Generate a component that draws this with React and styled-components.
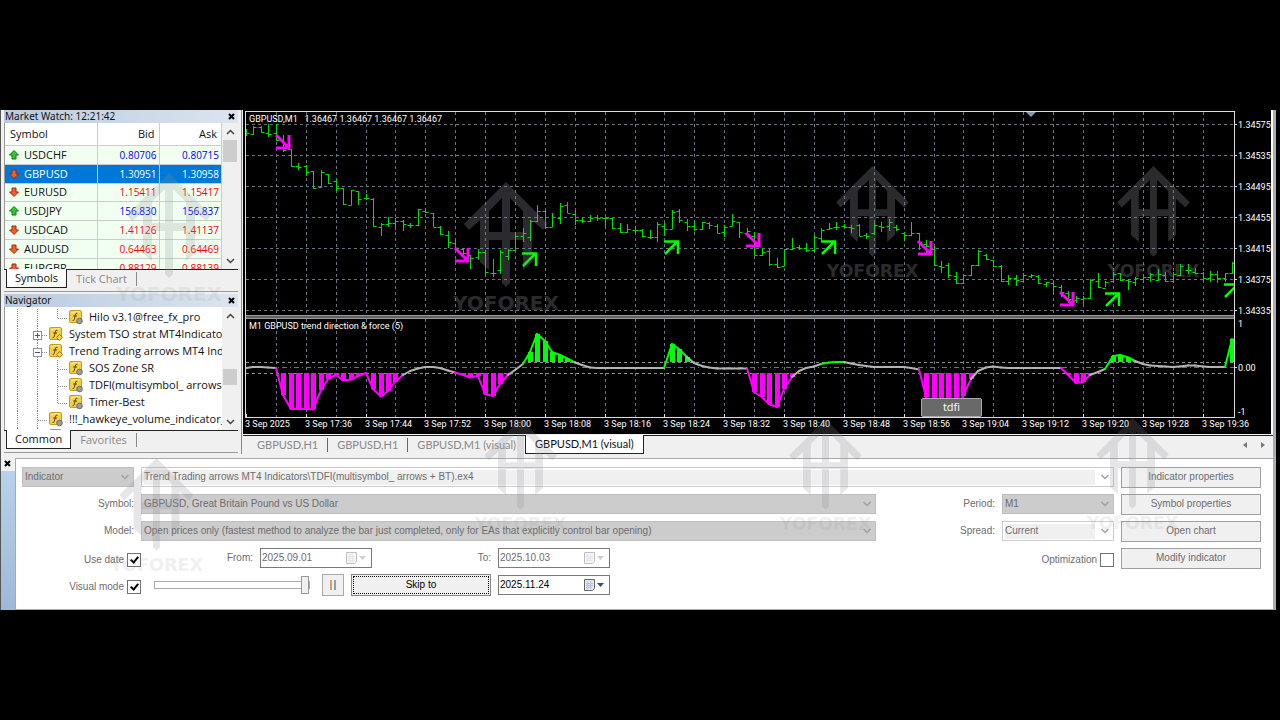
import React, { useState } from 'react'
import styled, { createGlobalStyle, css } from 'styled-components';

const GlobalStyle = createGlobalStyle`
  * { box-sizing: border-box; }
  body { margin: 0; background: #000; }
  button, input, select { font: inherit; color: inherit; margin: 0; padding: 0; border: 0; border-radius: 0; background: none; }
`;

const quotes = [
  { symbol: 'USDCHF', bid: '0.80706', ask: '0.80715', up: true },
  { symbol: 'GBPUSD', bid: '1.30951', ask: '1.30958', selected: true },
  { symbol: 'EURUSD', bid: '1.15411', ask: '1.15417' },
  { symbol: 'USDJPY', bid: '156.830', ask: '156.837', up: true },
  { symbol: 'USDCAD', bid: '1.41126', ask: '1.41137' },
  { symbol: 'AUDUSD', bid: '0.64463', ask: '0.64469' },
  { symbol: 'EURGBP', bid: '0.88129', ask: '0.88139' },
];

const tree = [
  { text: 'Hilo v3.1@free_fx_pro', guides: ['line', 'line', 'end'] },
  { text: 'System TSO strat MT4Indicators', guides: ['line', 'plus'], folder: true },
  { text: 'Trend Trading arrows MT4 Indicators', guides: ['line', 'minus'], folder: true },
  { text: 'SOS Zone SR', guides: ['line', 'line', 'branch'] },
  { text: 'TDFI(multisymbol_ arrows + BT)', guides: ['line', 'line', 'branch'] },
  { text: 'Timer-Best', guides: ['line', 'line', 'end'] },
  { text: '!!!_hawkeye_volume_indicator_', guides: ['line', 'branch'] },
  { text: '', guides: ['line', 'branch'] },
];

// high, low, open, close
const bars = [
  [23,30,27,27],[20,29,28,21],[20,27,21,26],[18,31,27,28],[18,35,27,34],[29,46,34,44],[43,61,43,60],[57,64,60,61],
  [59,70,60,66],[65,83,65,82],[64,81,81,66],[68,78,68,77],[73,85,75,82],[82,99,82,98],[84,99,99,84],[85,99,85,93],
  [88,94,92,92],[92,121,93,120],[117,130,121,118],[111,121,118,117],[112,124,117,115],[114,125,115,118],[117,122,119,119],[103,120,119,103],
  [103,107,105,106],[107,121,107,121],[120,129,121,128],[125,142,129,136],[134,145,137,142],[142,152,143,147],[149,163,149,152],[143,154,151,146],
  [146,171,146,166],[153,171,167,167],[144,168,164,146],[143,154,150,144],[127,145,144,130],[122,136,130,127],[114,135,131,115],[99,116,115,105],
  [104,123,105,121],[107,121,121,111],[97,118,112,100],[96,107,99,107],[104,119,108,114],[112,117,114,115],[109,116,115,112],[109,115,111,112],
  [111,121,112,112],[112,123,112,122],[117,127,122,126],[118,127,126,123],[120,127,124,124],[123,131,124,130],[124,133,131,131],[116,136,131,118],
  [117,130,120,123],[104,123,123,106],[103,117,105,114],[113,125,116,120],[115,125,120,123],[116,124,123,116],[116,123,117,119],[118,127,120,127],
  [119,131,126,121],[108,120,120,115],[116,132,116,126],[122,131,127,125],[126,149,130,149],[142,150,149,146],[143,160,145,158],[152,162,158,161],
  [143,160,160,143],[132,144,143,142],[139,144,141,142],[137,146,142,144],[129,146,144,131],[122,136,132,124],[117,124,123,122],[116,124,121,121],
  [118,122,120,121],[119,127,121,122],[118,130,119,130],[127,133,129,130],[117,129,127,119],[116,126,120,121],[113,125,120,116],[119,125,121,123],
  [126,135,127,129],[116,130,129,127],[127,144,127,136],[134,147,138,140],[140,160,143,159],[155,167,160,161],[157,172,159,169],[166,178,170,177],
  [168,178,177,169],[159,170,169,159],[144,160,159,145],[148,154,149,153],[154,161,154,160],[159,176,160,175],[169,179,175,172],[169,180,172,174],
  [167,176,175,169],[168,172,170,169],[169,178,170,177],[176,181,178,176],[175,188,177,180],[179,191,181,186],[185,197,187,193],[190,197,194,192],
  [190,198,193,192],[173,193,192,174],[167,182,175,181],[175,181,182,176],[166,176,175,168],[167,175,167,174],[173,184,174,175],[171,180,176,172],
  [169,177,173,171],[167,176,171,168],[163,175,174,168],[166,176,169,175],[166,176,175,168],[158,170,169,160],[158,168,164,164],[162,168,166,167],
  [166,175,167,172],[165,176,172,168],[165,177,168,172],[167,176,172,167],[156,168,167,157],
];

const force = [
  57,56,56,56.5,57,84,98,98,98,98.5,79,68,64,69.5,68.5,65,62,78,85.5,80,71,64,60,57.5,56,56,57,59.5,61.5,64,66.5,65,
  83,85,73,64,59,53,41,23,30,41,44,47.5,51.5,54,56.5,57,57,57,57,57,57,57,57,57,57,33,38,46,52,55,56.5,57.5,
  57.5,57.5,57.5,57.5,81,86,93,96,78,66,60,57,55.5,53,51.5,51,51,52.5,54,55,56,56,56,56,56,57,58.5,86,94,98,98,96,
  85,68,60,56.5,55.5,56.5,57,57,57,57,57,57,57,57,64,72,71,64,61,58,45,44,46.5,50,53,54.5,55,55.5,56,55.5,54.5,54.5,
  55.5,56,56,56,28,
];

const signals = [
  { x: 33, y: 25 }, { x: 212, y: 138 }, { x: 279, y: 142, up: true }, { x: 421, y: 130, up: true }, { x: 503, y: 123 },
  { x: 578, y: 130, up: true }, { x: 675, y: 131 }, { x: 817, y: 182 }, { x: 862, y: 182, up: true }, { x: 981, y: 173, up: true },
];

const prices = ['1.34575', '1.34535', '1.34495', '1.34455', '1.34415', '1.34375', '1.34335'];

const times = [
  '3 Sep 2025', '3 Sep 17:36', '3 Sep 17:44', '3 Sep 17:52', '3 Sep 18:00', '3 Sep 18:08', '3 Sep 18:16', '3 Sep 18:24', '3 Sep 18:32',
  '3 Sep 18:40', '3 Sep 18:48', '3 Sep 18:56', '3 Sep 19:04', '3 Sep 19:12', '3 Sep 19:20', '3 Sep 19:28', '3 Sep 19:36',
];

const marks = [
  { left: '8.9%', top: 63, width: 110, pale: true },
  { left: '35.4%', top: 72, width: 110 },
  { left: '64.8%', top: 56, width: 95 },
  { left: '86.9%', top: 56, width: 95 },
  { left: '8.4%', top: 348, width: 97, pale: true },
  { left: '37.1%', top: 309, width: 95, pale: true },
  { left: '61.1%', top: 309, width: 95, pale: true },
  { left: '85.2%', top: 308, width: 95, pale: true },
];

const STEP = 7.473;
const barX = i => Math.round(i * STEP);

export default function App() {
  return (
    <Page>
      <GlobalStyle/>
      <Terminal>
        <Workspace>
          <Sidebar>
            <MarketWatch/>
            <Navigator/>
          </Sidebar>
          <Charts/>
        </Workspace>
        <Tester/>
        {marks.map(m => <Watermark key={m.left} {...m}/>)}
      </Terminal>
    </Page>
  )
}

const PanelHead = ({title}) => (
  <Head>
    <span>{title}</span>
    <CloseButton aria-label={`Close ${title}`}><Cross/></CloseButton>
  </Head>
)

const Cross = () => (
  <svg width="7" height="7" viewBox="0 0 7 7"><path d="M1 1l5 5M6 1L1 6" stroke="#000" strokeWidth="2"/></svg>
)

const Chevron = ({up, color = '#444', size = 9}) => (
  <svg width={size} height="6" viewBox="0 0 9 6">
    <path d={up ? 'M1 5l3.500-3.500L8 5' : 'M1 1l3.500 3.500L8 1'} fill="none" stroke={color} strokeWidth="1.500"/>
  </svg>
)

const Scrollbar = ({lead}) => (
  <ScrollTrack>
    <Chevron up/>
    <ScrollThumb $lead={lead}/>
    <Chevron/>
  </ScrollTrack>
)

const Direction = ({up}) => (
  <svg width="10" height="10" viewBox="0 0 10 10">
    <path
      d={up ? 'M5 .5L9.500 5H7v4H3V5H.5z' : 'M5 9.500L9.500 5H7V1H3v4H.5z'}
      fill={up ? '#35c435' : '#f0602c'}
      stroke={up ? '#0c7a1c' : '#9c2c10'}
      strokeWidth="1"
    />
  </svg>
)

const MarketWatch = () => {
  const [tab, setTab] = useState('Symbols');
  return (
    <Panel>
      <PanelHead title="Market Watch: 12:21:42"/>
      <PanelBody $height={146}>
        <Quotes>
          <thead>
            <tr><th>Symbol</th><th>Bid</th><th>Ask</th></tr>
          </thead>
          <tbody>
            {quotes.map(q => (
              <QuoteRow key={q.symbol} $up={q.up} $selected={q.selected}>
                <td><SymbolName><Direction up={q.up}/>{q.symbol}</SymbolName></td>
                <td>{q.bid}</td>
                <td>{q.ask}</td>
              </QuoteRow>
            ))}
          </tbody>
        </Quotes>
        <Scrollbar lead={5}/>
      </PanelBody>
      <PanelTabs>
        {['Symbols', 'Tick Chart'].map(t => (
          <PanelTab key={t} $active={t === tab} onClick={() => setTab(t)}>{t}</PanelTab>
        ))}
      </PanelTabs>
    </Panel>
  )
}

const Guide = ({kind}) => {
  const box = kind === 'plus' || kind === 'minus';
  return (
    <svg width="20" height="17" viewBox="0 0 20 17" fill="none" stroke="#888">
      <path d={kind === 'end' ? 'M8.500 0V9' : 'M8.500 0V17'} strokeDasharray="1 1"/>
      {kind !== 'line' && <path d="M9 9.500H19" strokeDasharray="1 1"/>}
      {box && <rect x="4.500" y="5.500" width="8" height="8" fill="#fff" stroke="#8a9099"/>}
      {box && <path d={kind === 'plus' ? 'M6 9.500h5M8.500 7v5' : 'M6 9.500h5'} stroke="#3c54a0"/>}
    </svg>
  )
}

const Indicator = ({folder}) => (
  <svg width="14" height="15" viewBox="0 0 14 15">
    <rect x=".5" y=".5" width="12" height="12" rx="1.500" fill="#f3cf48" stroke="#c79a22"/>
    <path d="M2 3Q6 1 11 2" stroke="#fff2b0" fill="none"/>
    <path d="M8.500 3.200Q6.800 2.400 6.300 5L5.300 9.300Q4.900 11 3.600 10.500M4.200 6h3.800" stroke="#5d4714" fill="none"/>
    {folder
      ? <path d="M10.500 7.500l3 3-3 3-3-3z" fill="#f6d13f" stroke="#a37b12"/>
      : <circle cx="10.500" cy="11" r="2.800" fill="#9c9c98" stroke="#6c6c6c"/>}
  </svg>
)

const Navigator = () => {
  const [tab, setTab] = useState('Common');
  return (
    <Panel>
      <PanelHead title="Navigator"/>
      <PanelBody $height={123}>
        <Tree>
          {tree.map((node, i) => (
            <TreeRow key={i}>
              {node.guides.map((g, n) => <Guide key={n} kind={g}/>)}
              <Indicator folder={node.folder}/>
              <span>{node.text}</span>
            </TreeRow>
          ))}
        </Tree>
        <Scrollbar lead={50}/>
      </PanelBody>
      <PanelTabs>
        {['Common', 'Favorites'].map(t => (
          <PanelTab key={t} $active={t === tab} onClick={() => setTab(t)}>{t}</PanelTab>
        ))}
      </PanelTabs>
    </Panel>
  )
}

const PriceBars = () => (
  <g transform="translate(3 -4)" fill="none" stroke="#00e000">
    {bars.map(([high, low, open, close], i) => {
      const x = barX(i) + 0.5;
      return <path key={i} d={`M${x} ${high}V${low}M${x - 3} ${open + 0.5}H${x}M${x} ${close + 0.5}H${x + 3}`}/>
    })}
  </g>
)

const lineColor = v => v >= 62 ? '#ff00ff' : v <= 51.5 ? '#00ff00' : '#b4b4b4';

const ForcePlot = () => (
  <g transform="translate(3 201)">
    {force.map((v, i) => {
      if (v >= 63) return <rect key={i} x={barX(i) - 2} y="62" width="5" height={v - 62} fill="#ff00ff"/>
      if (v <= 50) return <rect key={i} x={barX(i) - 2} y={v} width="5" height={51 - v} fill="#00ff00"/>
      return null
    })}
    {force.slice(1).map((v, i) => (
      <path key={i} d={`M${barX(i)} ${force[i]}L${barX(i + 1)} ${v}`} stroke={lineColor(v)} strokeWidth="2" strokeLinecap="round"/>
    ))}
  </g>
)

const Signal = ({x, y, up}) => (
  <path
    transform={`translate(${x} ${y})`}
    d={up ? 'M1 14L13 2M0 1.500H14V14' : 'M0 0L12 12M13 0V13H0'}
    fill="none"
    stroke={up ? '#00ff00' : '#ff00ff'}
    strokeWidth={up ? 2.5 : 3}
  />
)

const ChartDrawing = () => (
  <Drawing viewBox="0 0 1028 324" role="img" aria-label="GBPUSD M1 chart">
    <defs>
      <clipPath id="plot"><path d="M3 2H991V307H3z"/></clipPath>
    </defs>
    <g clipPath="url(#plot)">
      <g stroke="#778899" strokeDasharray="3 3" fill="none" shapeRendering="crispEdges" opacity=".85">
        {Array.from({ length: 32 }, (_, i) => {
          const x = 3 + barX(4 + i * 4) + 0.5;
          return <path key={i} d={`M${x} 2V204M${x} 209V307`}/>
        })}
        {prices.map((p, i) => <path key={p} d={`M3 ${Math.round(14 + i * 31.07) + 0.5}H991`}/>)}
        <path d="M3 257.500H991" strokeDasharray="5 3 1 3"/>
        <path d="M3 252.500H991M3 263.500H991" stroke="#aaa"/>
      </g>
      <PriceBars/>
      <ForcePlot/>
      {signals.map((s, i) => <Signal key={i} {...s}/>)}
    </g>
    <path d="M783 2h10l-5 5z" fill="#8899aa"/>
    <g stroke="#dcdcdc" fill="none" shapeRendering="crispEdges">
      <path d="M2.500 1V308M2 1.500H992M991.500 1V308M2 307.500H992"/>
      <path d="M3 205.500H991M3 208.500H991" stroke="#999"/>
      <path d="M3 207H991" stroke="#606060" strokeWidth="2"/>
      {prices.map((p, i) => <path key={p} d={`M992 ${Math.round(14 + i * 31.07) + 0.5}h2`}/>)}
      {times.map((t, i) => <path key={t} d={`M${barX(i * 8) + 3.5} 304v4`}/>)}
      <path d="M992 257.500h2"/>
    </g>
    <ChartText x="6" y="12">GBPUSD,M1&nbsp;&nbsp; 1.36467 1.36467 1.36467 1.36467</ChartText>
    <ChartText x="6" y="219">M1 GBPUSD trend direction &amp; force (5)</ChartText>
    {prices.map((p, i) => <ChartText key={p} x="995" y={Math.round(18 + i * 31.07)}>{p}</ChartText>)}
    <ChartText x="995" y="217">1</ChartText>
    <ChartText x="995" y="261">0.00</ChartText>
    <ChartText x="995" y="305">-1</ChartText>
    {times.map((t, i) => <ChartText key={t} x={2 + barX(i * 8)} y="317">{t}</ChartText>)}
  </Drawing>
)

const chartTabs = ['GBPUSD,H1', 'GBPUSD,H1', 'GBPUSD,M1 (visual)', 'GBPUSD,M1 (visual)'];

const Charts = () => {
  const [active, setActive] = useState(3);
  return (
    <ChartArea>
      <ChartWindow>
        <ChartDrawing/>
        <TdfiButton>tdfi</TdfiButton>
      </ChartWindow>
      <ChartTabs>
        {chartTabs.map((t, i) => (
          <ChartTab key={i} $active={i === active} $ruled={i < 2} onClick={() => setActive(i)}>{t}</ChartTab>
        ))}
        <TabArrows>
          <button aria-label="Previous"><svg width="4" height="6"><path d="M4 0v6L0 3z" fill="#777"/></svg></button>
          <button aria-label="Next"><svg width="4" height="6"><path d="M0 0v6l4-3z" fill="#777"/></svg></button>
        </TabArrows>
      </ChartTabs>
    </ChartArea>
  )
}

const Combo = ({id, value, label, light, grow}) => (
  <ComboBox $light={light} $grow={grow}>
    <select id={id} aria-label={label} defaultValue={value}><option>{value}</option></select>
    <Chevron color="#a0a0a0" size={10}/>
  </ComboBox>
)

const DateField = ({id, label, value, active}) => (
  <DateBox $active={active}>
    <input id={id} aria-label={label} defaultValue={value}/>
    <button aria-label="Pick a date">
      <svg width="21" height="12" viewBox="0 0 21 12" opacity={active ? 1 : 0.4}>
        <path d="M.5 .5h10v9l-2 2h-8z" fill="#e4e8f0" stroke="#67635f"/>
        <path d="M2 4.500h7M2 6.500h7M2 8.500h6M3.500 2v8M6.500 2v8" stroke="#b8c4dc"/>
        <path d="M13 4h7l-3.500 4z" fill={active ? '#2c4c84' : '#888'}/>
      </svg>
    </button>
  </DateBox>
)

const Check = ({id, label, checked}) => (
  <CheckLabel htmlFor={id}>
    {label}
    <CheckInput id={id} type="checkbox" defaultChecked={checked}/>
  </CheckLabel>
)

const Tester = () => (
  <TesterPanel>
    <TesterStrip>
      <CloseButton aria-label="Close tester"><Cross/></CloseButton>
    </TesterStrip>
    <Form onSubmit={e => e.preventDefault()}>
      <Fields>
        <Row>
          <Combo label="Program type" value="Indicator"/>
          <Combo label="Program" value="Trend Trading arrows MT4 Indicators\TDFI(multisymbol_ arrows + BT).ex4" light grow/>
        </Row>
        <Row>
          <Label htmlFor="symbol">Symbol:</Label>
          <Combo id="symbol" value="GBPUSD, Great Britain Pound vs US Dollar" grow/>
          <Label htmlFor="period">Period:</Label>
          <Combo id="period" value="M1"/>
        </Row>
        <Row>
          <Label htmlFor="model">Model:</Label>
          <Combo id="model" value="Open prices only (fastest method to analyze the bar just completed, only for EAs that explicitly control bar opening)" grow/>
          <Label htmlFor="spread">Spread:</Label>
          <Combo id="spread" value="Current" light/>
        </Row>
        <Row>
          <LeadCell><Check id="use-date" label="Use date" checked/></LeadCell>
          <Label htmlFor="from">From:</Label>
          <DateField id="from" value="2025.09.01"/>
          <Label htmlFor="to">To:</Label>
          <DateField id="to" value="2025.10.03"/>
          <Spacer/>
          <Check id="optimization" label="Optimization"/>
        </Row>
        <Row>
          <LeadCell><Check id="visual" label="Visual mode" checked/></LeadCell>
          <Speed type="range" aria-label="Speed" defaultValue="100"/>
          <PauseButton aria-label="Pause">
            <svg width="8" height="10"><path d="M1 0h2v10H1z" fill="#d9a05c"/><path d="M5 0h2v10H5z" fill="#8fa0b4"/></svg>
          </PauseButton>
          <SkipButton>Skip to</SkipButton>
          <DateField label="Skip to date" value="2025.11.24" active/>
        </Row>
      </Fields>
      <Actions>
        {['Indicator properties', 'Symbol properties', 'Open chart', 'Modify indicator'].map(t => (
          <ActionButton key={t}>{t}</ActionButton>
        ))}
      </Actions>
    </Form>
  </TesterPanel>
)

const Watermark = ({left, top, width, pale}) => (
  <Mark style={{ left, top, width }} $pale={pale} viewBox="0 0 110 130" aria-hidden="true">
    <path
      fillRule="evenodd"
      d="M55 0L97 42L92 48L81 38V80L72 88V58H59V101L55 105L51 101V58H38V88L29 80V38L18 48L13 42ZM51 16V50H38V29ZM59 16L72 29V50H59Z"
    />
    <text x="55" y="128" textAnchor="middle">YOFOREX</text>
  </Mark>
)

const Page = styled.div`
  min-height: 100vh;
  display: flex;
  flex-direction: column;
  justify-content: center;
  padding: 0 4px 1px 0;
  background: #000;
`;

const Terminal = styled.main`
  position: relative;
  border-left: 1px solid #555;
  border-right: 3px solid #a9adb2;
  background: #f0f0f0;
  color: #111;
  font: 11px/14px 'Open Sans', 'Noto Sans', sans-serif;
`;

const Workspace = styled.div`
  display: flex;
`;

const Sidebar = styled.aside`
  flex: none;
  width: 241px;
  display: flex;
  flex-direction: column;
  gap: 2px;
  padding: 0 3px;
  border-right: 1px solid #888;
`;

const Panel = styled.section`
  border-bottom: 1px solid #999;
`;

const Head = styled.header`
  display: flex;
  align-items: center;
  justify-content: space-between;
  height: 13px;
  padding: 0 1px;
  background: linear-gradient(90deg, #b9cbe0, #dce4ef);
  font: 10px/12px 'Noto Sans', sans-serif;
`;

const CloseButton = styled.button`
  display: flex;
  align-items: center;
  justify-content: center;
  width: 11px;
  height: 11px;
`;

const PanelBody = styled.div`
  display: flex;
  height: ${p => p.$height}px;
  overflow: hidden;
  background: #fff;
  border-left: 1px solid #999;
`;

const Quotes = styled.table`
  flex: 1;
  height: 155px;
  border-collapse: collapse;
  table-layout: fixed;
  th, td {
    padding: 0 2px;
    text-align: right;
    border-right: 1px solid #ccc;
    border-bottom: 1px solid #ccc;
  }
  th { height: 23px; font-weight: normal; padding-right: 4px; }
  td { font-size: 10px; line-height: 14px; }
  th:first-child, td:first-child { width: 92px; text-align: left; padding-left: 5px; font-size: 11px; }
  td:first-child { padding-left: 4px; }
  th:nth-child(2), td:nth-child(2) { width: 62px; }
`;

const QuoteRow = styled.tr`
  background: ${p => p.$selected ? '#0078d7' : '#f0fff0'};
  color: ${p => p.$selected ? '#fff' : p.$up ? '#00f' : '#f00'};
  td:first-child { color: ${p => p.$selected ? '#fff' : '#111'}; }
`;

const SymbolName = styled.span`
  display: flex;
  align-items: center;
  gap: 5px;
`;

const ScrollTrack = styled.div`
  flex: none;
  width: 16px;
  display: flex;
  flex-direction: column;
  align-items: center;
  padding: 6px 0 5px;
  background: #f0f0f0;
  > svg:last-child { margin-top: auto; }
`;

const ScrollThumb = styled.div`
  width: 14px;
  height: ${p => p.$lead > 20 ? 16 : 22}px;
  margin-top: ${p => p.$lead}px;
  background: #cdcdcd;
`;

const PanelTabs = styled.div`
  display: flex;
  align-items: center;
  height: 22px;
  padding: 0 0 3px 2px;
  border-top: 1px solid #222;
`;

const PanelTab = styled.button`
  height: 14px;
  padding: 0 9px;
  color: #888;
  border-right: 1px solid #888;
  ${p => p.$active && css`
    height: 19px;
    padding: 0 8px;
    color: #111;
    background: #fff;
    border: 1px solid #222;
    border-top: 0;
  `}
`;

const Tree = styled.div`
  flex: 1;
  min-width: 0;
  overflow: hidden;
  padding-top: 2px;
`;

const TreeRow = styled.div`
  display: flex;
  height: 17px;
  align-items: center;
  padding-left: 4px;
  white-space: nowrap;
  svg { flex: none; }
  span { margin-left: 6px; }
`;

const ChartArea = styled.section`
  flex: 1;
  min-width: 0;
  padding-left: 1px;
  display: flex;
  flex-direction: column;
`;

const ChartWindow = styled.div`
  position: relative;
  background: #000;
  border-right: 2px solid #fff;
`;

const Drawing = styled.svg`
  display: block;
  width: 100%;
`;

const ChartText = styled.text`
  font: 9px Roboto, sans-serif;
  fill: #fff;
`;

const TdfiButton = styled.button`
  position: absolute;
  right: 289px;
  bottom: 17px;
  width: 61px;
  height: 19px;
  background: #696969;
  border: 1px solid #a9a9a9;
  border-radius: 2px;
  color: #fff;
`;

const ChartTabs = styled.nav`
  display: flex;
  align-items: center;
  height: 19px;
  margin-top: 1px;
  padding-left: 5px;
  border-top: 1px solid #222;
  font: 11px/14px Lato, sans-serif;
`;

const ChartTab = styled.button`
  height: 14px;
  padding: 0 9px;
  color: #888;
  white-space: nowrap;
  border-right: ${p => p.$ruled ? '1px solid #666' : '0'};
  ${p => p.$active && css`
    height: 19px;
    margin-top: -1px;
    color: #111;
    background: #fff;
    border: 1px solid #222;
    border-top: 0;
  `}
`;

const TabArrows = styled.div`
  display: flex;
  gap: 14px;
  margin-left: auto;
  padding-right: 8px;
  button { display: flex; }
`;

const TesterPanel = styled.section`
  display: flex;
  padding-top: 4px;
  font: 10px/14px 'Liberation Sans', Arial, sans-serif;
  color: #6d6d6d;
`;

const TesterStrip = styled.div`
  flex: none;
  width: 14px;
  padding-left: 1px;
  background: linear-gradient(#f0f0f0 13px, #b9d1ea 13px, #9fb8d6);
`;

const Form = styled.form`
  flex: 1;
  min-width: 0;
  display: flex;
  gap: 7px;
  padding: 8px 12px 13px 6px;
  background: #fff;
  border: 1px solid #aaa;
  border-width: 1px 0 1px 1px;
`;

const Fields = styled.div`
  flex: 1;
  min-width: 0;
  display: flex;
  flex-direction: column;
  gap: 6px;
`;

const Row = styled.div`
  display: flex;
  align-items: center;
  height: 21px;
  gap: 7px;
`;

const Label = styled.label`
  flex: none;
  width: 112px;
  text-align: right;
`;

const ComboBox = styled.div`
  flex: ${p => p.$grow ? '1' : '0 0 112px'};
  min-width: 0;
  display: flex;
  align-items: center;
  height: 20px;
  padding: 2px 3px 2px 2px;
  background: ${p => p.$light ? '#fff' : '#ccc'};
  border: 1px solid ${p => p.$light ? '#ccc' : '#bfbfbf'};
  select {
    flex: 1;
    min-width: 0;
    height: 15px;
    margin-right: 5px;
    appearance: none;
    background: ${p => p.$light ? '#f0f0f0' : 'none'};
  }
  svg { flex: none; }
`;

const DateBox = styled.div`
  flex: none;
  width: 112px;
  height: 20px;
  display: flex;
  align-items: center;
  justify-content: space-between;
  padding: 0 4px 0 1px;
  background: #fff;
  border: 1px solid #7a7a7a;
  color: ${p => p.$active ? '#000' : '#6d6d6d'};
  input { width: 70px; outline: 0; }
  button { display: flex; }
`;

const LeadCell = styled.div`
  flex: none;
  width: 119px;
  display: flex;
  justify-content: flex-end;
  margin-right: -7px;
`;

const CheckLabel = styled.label`
  display: flex;
  align-items: center;
  gap: 3px;
  padding-top: 3px;
`;

const CheckInput = styled.input`
  appearance: none;
  width: 14px;
  height: 14px;
  border: 1px solid #707070;
  background: #fff;
  &:checked::after {
    content: '';
    display: block;
    width: 3px;
    height: 6px;
    margin: 1px 0 0 4px;
    border: solid #000;
    border-width: 0 2px 2px 0;
    transform: rotate(40deg);
  }
`;

const Spacer = styled.div`
  flex: 1;
`;

const Speed = styled.input`
  appearance: none;
  width: 156px;
  height: 19px;
  margin: 0 5px 0 13px;
  &::-webkit-slider-runnable-track {
    height: 8px;
    background: #fff;
    border: 1px solid #aaa;
  }
  &::-webkit-slider-thumb {
    appearance: none;
    width: 8px;
    height: 18px;
    margin-top: -6px;
    background: #f0f0f0;
    border: 1px solid #999;
  }
`;

const PauseButton = styled.button`
  display: flex;
  align-items: center;
  justify-content: center;
  width: 22px;
  height: 22px;
  background: #f0f0f0;
  border: 1px solid #aaa;
`;

const SkipButton = styled.button`
  width: 140px;
  height: 22px;
  background: #f0f0f0;
  border: 1px solid #888;
  outline: 1px dotted #000;
  outline-offset: -3px;
  color: #000;
`;

const Actions = styled.div`
  flex: none;
  width: 140px;
  display: flex;
  flex-direction: column;
  gap: 6px;
`;

const ActionButton = styled.button`
  height: 21px;
  background: #f0f0f0;
  border: 1px solid #a0a0a0;
`;

const Mark = styled.svg`
  position: absolute;
  overflow: visible;
  pointer-events: none;
  fill: #90909a;
  opacity: ${p => p.$pale ? 0.22 : 0.3};
  text {
    font: bold 20px 'DejaVu Sans', sans-serif;
    opacity: ${p => p.$pale ? 0.6 : 1};
  }
`;
